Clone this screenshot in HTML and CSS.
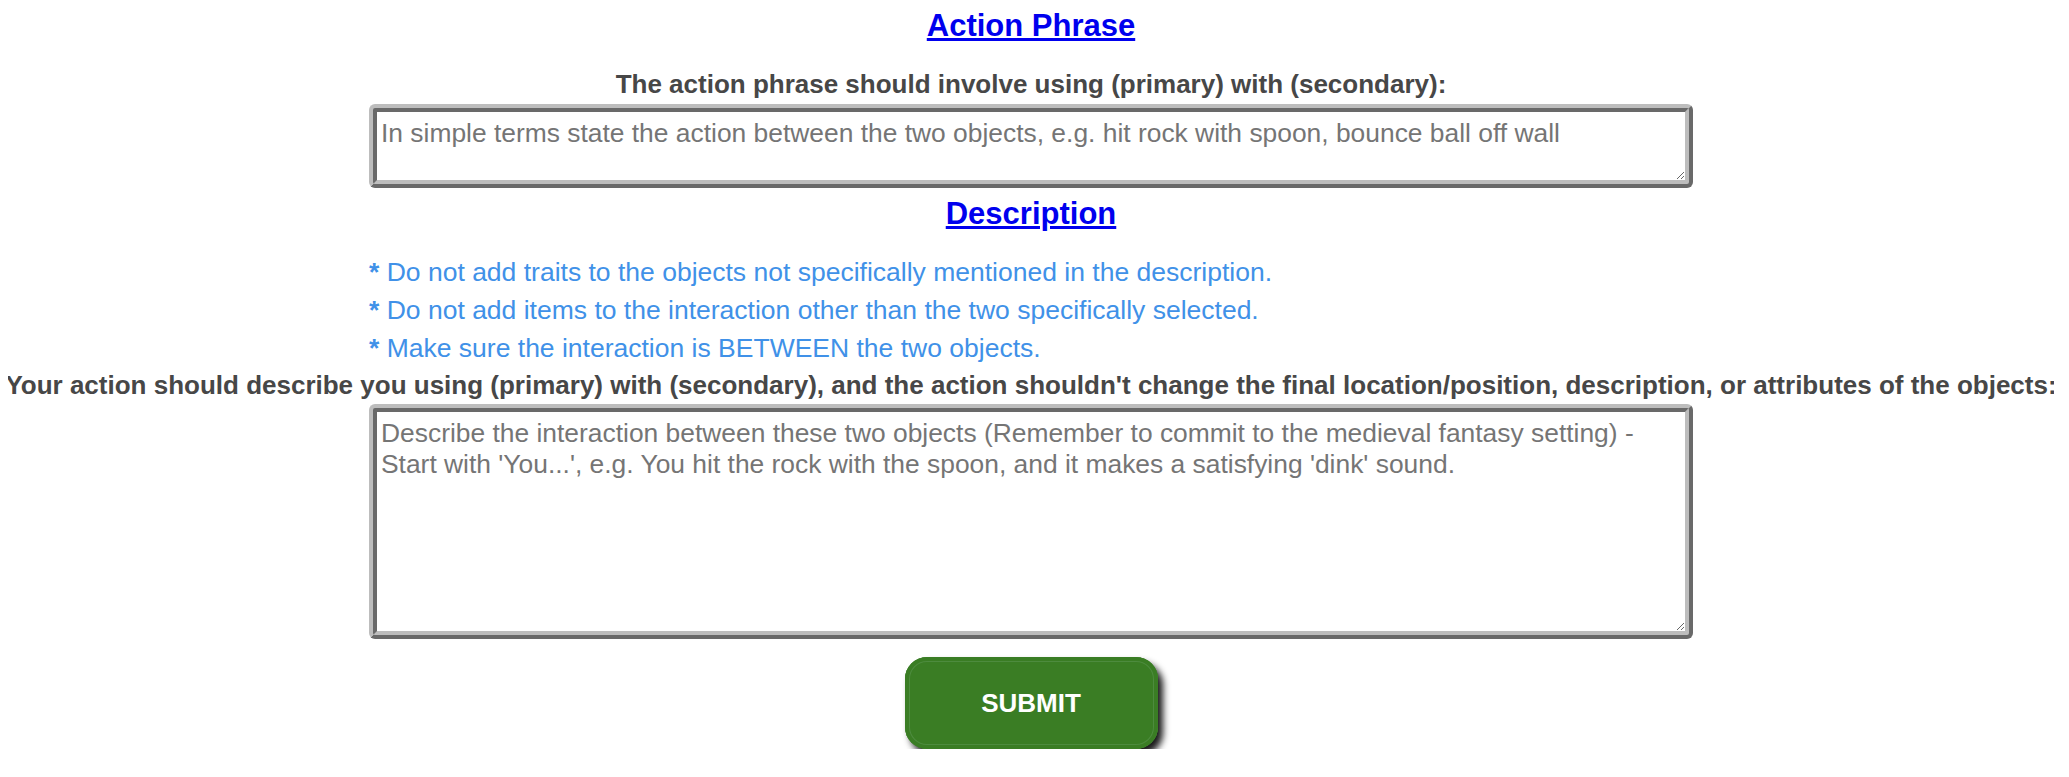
FILE: index.html
```html
<!DOCTYPE html>
<html lang="en">
<head>
    <meta charset="UTF-8">
    <meta name="viewport" content="width=device-width, initial-scale=1.0">
    <title>Action Phrase</title>
    <link rel="stylesheet" href="styles.css">
</head>
<body>
    <form class="interaction-form" onsubmit="return false;">
        <h2 class="section-title">Action Phrase</h2>
        <label class="field-label" for="actionPhrase">The action phrase should involve using (primary) with (secondary):</label>
        <textarea id="actionPhrase" class="field short" placeholder="In simple terms state the action between the two objects, e.g. hit rock with spoon, bounce ball off wall"></textarea>

        <h2 class="section-title title-gap">Description</h2>
        <div class="rules">
            <p class="rule"><b>*</b> Do not add traits to the objects not specifically mentioned in the description.</p>
            <p class="rule"><b>*</b> Do not add items to the interaction other than the two specifically selected.</p>
            <p class="rule"><b>*</b> Make sure the interaction is BETWEEN the two objects.</p>
        </div>
        <label class="field-label" for="description">Your action should describe you using (primary) with (secondary), and the action shouldn't change the final location/position, description, or attributes of the objects:</label>
        <textarea id="description" class="field tall" placeholder="Describe the interaction between these two objects (Remember to commit to the medieval fantasy setting) - Start with 'You...', e.g. You hit the rock with the spoon, and it makes a satisfying 'dink' sound."></textarea>

        <button type="submit" class="submit-btn">SUBMIT</button>
    </form>
</body>
</html>
```

FILE: styles.css
```css
body {
    font-family: 'Liberation Sans', Arial, sans-serif;
    margin: 8px 15px 8px 8px;
    background: #fff;
    color: #444;
    text-align: center;
}
.interaction-form {
    display: flex;
    flex-direction: column;
    align-items: center;
}
.section-title {
    margin: 0;
    font-size: 31px;
    font-weight: bold;
    color: #0000ee;
    text-decoration: underline;
}
.title-gap {
    margin-top: 8px;
}
.field-label {
    display: block;
    margin: 25px 0 4px;
    font-size: 26px;
    font-weight: bold;
    color: #474747;
    white-space: nowrap;
}
.field {
    display: block;
    box-sizing: border-box;
    width: 1324px;
    padding: 6px 10px 6px 4px;
    border: 8px ridge #bdbdbd;
    border-radius: 6px;
    font-family: 'Liberation Sans', Arial, sans-serif;
    font-size: 26.4px;
    color: #333;
    background: #fff;
    outline: none;
}
.field::placeholder {
    color: #757575;
}
.field.short {
    height: 84px;
}
.field.tall {
    height: 235px;
}
.rules {
    width: 1324px;
    margin-top: 21px;
    text-align: left;
}
.rule {
    margin: 0;
    font-size: 26.5px;
    line-height: 38px;
    color: #4091e8;
}
.rules + .field-label {
    margin-top: 3px;
    margin-bottom: 3px;
}
.submit-btn {
    margin-top: 18px;
    width: 253px;
    height: 92px;
    border: none;
    border-radius: 22px;
    background: #3a7d24;
    color: #fff;
    font-family: 'Liberation Sans', Arial, sans-serif;
    font-size: 26px;
    font-weight: bold;
    cursor: pointer;
    box-shadow: inset 0 0 0 4px #3a7d24, inset 0 0 0 5px #4d8b3e, 5px 6px 7px rgba(0, 0, 0, 0.9);
}
.submit-btn:hover {
    background: #347020;
}
```
